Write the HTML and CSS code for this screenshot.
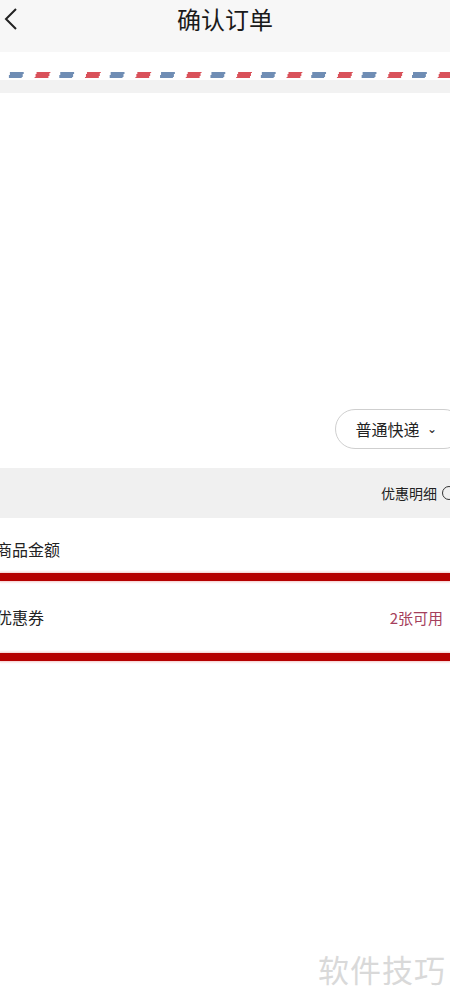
FILE: index.html
```html
<!DOCTYPE html>
<html lang="zh-CN">
<head>
    <meta charset="UTF-8">
    <meta name="viewport" content="width=device-width, initial-scale=1.0">
    <title>确认订单</title>
    <link rel="stylesheet" href="styles.css">
</head>
<body>
    <header class="nav-bar">
        <span class="back-btn">
            <svg width="14" height="24" viewBox="0 0 14 24"><path d="M12 2 L2 12 L12 22" fill="none" stroke="#222" stroke-width="2"/></svg>
        </span>
        <h1 class="nav-title">确认订单</h1>
    </header>

    <div class="address-card">
        <div class="airmail"></div>
    </div>
    <div class="gap"></div>

    <section class="goods-area">
        <div class="delivery-row">
            <button class="delivery-btn">普通快递 <span class="caret">⌄</span></button>
        </div>
    </section>

    <div class="discount-bar">
        <span>优惠明细</span>
        <span class="info-icon"></span>
    </div>

    <div class="price-row">
        <span class="label">商品金额</span>
    </div>
    <div class="red-line"></div>
    <div class="price-row coupon-row">
        <span class="label">优惠券</span>
        <span class="coupon-count">2张可用</span>
    </div>
    <div class="red-line"></div>

    <div class="watermark">软件技巧</div>
</body>
</html>
```

FILE: styles.css
```css
body {
    margin: 0;
    background-color: #ffffff;
    color: #222;
    font-family: "Noto Sans CJK SC", "Noto Sans", sans-serif;
    overflow: hidden;
    height: 1001px;
    position: relative;
}
.nav-bar {
    height: 52px;
    background-color: #f7f7f7;
    display: flex;
    align-items: center;
    justify-content: center;
    position: relative;
}
.back-btn {
    position: absolute;
    left: 4px;
    top: 7px;
    display: flex;
}
.nav-title {
    margin: 0;
    font-size: 24px;
    font-weight: normal;
    line-height: 1;
    margin-top: -15px;
    color: #1a1a1a;
}
.address-card {
    padding-top: 20px;
    padding-bottom: 2px;
    background-color: #ffffff;
}
.airmail {
    height: 6px;
    background-image: repeating-linear-gradient(-72deg,
        transparent 0, transparent 2px,
        #d9515a 2px, #d9515a 15px,
        transparent 15px, transparent 27px,
        #6f8db4 27px, #6f8db4 40px,
        transparent 40px, transparent 50px);
    background-size: 50.4px 6px;
    background-position: 0 0;
}
.gap {
    height: 13px;
    background-color: #f2f2f2;
}
.goods-area {
    height: 375px;
    display: flex;
    align-items: flex-end;
    justify-content: flex-end;
}
.delivery-row {
    padding-bottom: 19px;
    margin-right: -14px;
}
.delivery-btn {
    height: 40px;
    padding: 0 26px 0 19px;
    border: 1px solid #cfcfcf;
    border-radius: 20px;
    background: #fff;
    font-family: inherit;
    font-size: 16px;
    color: #222;
}
.caret {
    font-size: 12px;
    margin-left: 4px;
    position: relative;
    top: -3px;
}
.discount-bar {
    height: 50px;
    background-color: #f0f0f0;
    display: flex;
    align-items: center;
    justify-content: flex-end;
    font-size: 14px;
    color: #222;
    margin-right: -6px;
    gap: 5px;
}
.info-icon {
    width: 12px;
    height: 12px;
    border: 1.5px solid #333;
    border-radius: 50%;
}
.price-row {
    height: 55px;
    display: flex;
    align-items: center;
    justify-content: space-between;
    padding-top: 6px;
    box-sizing: border-box;
}
.coupon-row {
    height: 72px;
    padding-top: 0;
}
.label {
    font-size: 16px;
    margin-left: -4px;
}
.coupon-count {
    font-size: 15px;
    color: #a5405c;
    margin-right: 7px;
}
.red-line {
    height: 8px;
    background-color: #b50000;
    box-shadow: 0 0 2px 1px #f2c8c8;
}
.watermark {
    position: absolute;
    right: 4px;
    top: 946px;
    font-size: 31px;
    color: #d9d9d9;
    letter-spacing: 1px;
}
```
